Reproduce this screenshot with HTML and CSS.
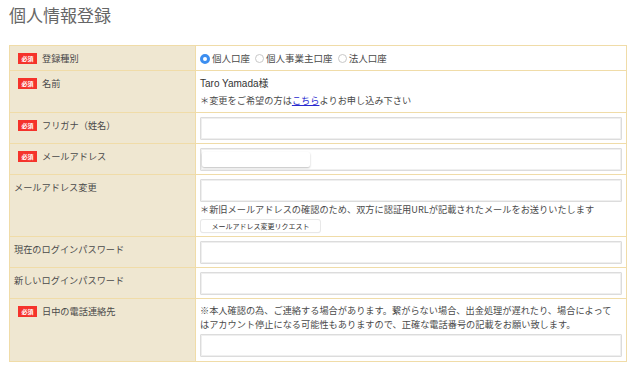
FILE: index.html
```html
<!DOCTYPE html>
<html lang="ja">
<head>
  <meta charset="UTF-8">
  <title>個人情報登録</title>
  <link rel="stylesheet" href="styles.css">
</head>
<body>
  <h1 class="page-title">個人情報登録</h1>
  <table class="form-table">
    <tr class="row-type">
      <th><span class="req">必須</span>登録種別</th>
      <td>
        <label class="radio"><span class="dot checked"></span>個人口座</label>
        <label class="radio"><span class="dot"></span>個人事業主口座</label>
        <label class="radio"><span class="dot"></span>法人口座</label>
      </td>
    </tr>
    <tr class="row-name">
      <th><span class="req">必須</span>名前</th>
      <td>
        <div class="name">Taro Yamada様</div>
        <div class="note">＊変更をご希望の方は<a href="#">こちら</a>よりお申し込み下さい</div>
      </td>
    </tr>
    <tr>
      <th><span class="req">必須</span>フリガナ（姓名）</th>
      <td><input type="text" class="field"></td>
    </tr>
    <tr>
      <th><span class="req">必須</span>メールアドレス</th>
      <td>
        <div class="field-wrap">
          <input type="text" class="field">
          <!-- browser autofill popup sitting on the field -->
          <div class="autofill"></div>
        </div>
      </td>
    </tr>
    <tr class="row-mail">
      <th class="plain">メールアドレス変更</th>
      <td>
        <input type="text" class="field">
        <div class="note">＊新旧メールアドレスの確認のため、双方に認証用URLが記載されたメールをお送りいたします</div>
        <button class="small-btn">メールアドレス変更リクエスト</button>
      </td>
    </tr>
    <tr>
      <th class="plain">現在のログインパスワード</th>
      <td><input type="password" class="field"></td>
    </tr>
    <tr>
      <th class="plain">新しいログインパスワード</th>
      <td><input type="password" class="field"></td>
    </tr>
    <tr class="row-tel">
      <th><span class="req">必須</span>日中の電話連絡先</th>
      <td>
        <div class="note tel-note">※本人確認の為、ご連絡する場合があります。繋がらない場合、出金処理が遅れたり、場合によって<br>はアカウント停止になる可能性もありますので、正確な電話番号の記載をお願い致します。</div>
        <input type="text" class="field">
      </td>
    </tr>
  </table>
</body>
</html>
```

FILE: styles.css
```css
body {
  margin: 0;
  padding: 0 0 0 9px;
  background-color: #fff;
  color: #4a4a4a;
  font-family: "Noto Sans CJK JP", "Liberation Sans", sans-serif;
  font-size: 9.2px;
}
.page-title {
  margin: 0;
  padding-top: 4px;
  height: 41px;
  font-size: 17px;
  font-weight: normal;
  color: #666;
  line-height: 22px;
}
.form-table {
  width: 618px;
  border-collapse: collapse;
  border: 1px solid #f0dca8;
}
.form-table th,
.form-table td {
  border: 1px solid #f0dca8;
  padding: 4px 4px 3px;
  vertical-align: top;
  text-align: left;
  line-height: 16px;
}
.form-table th {
  width: 177px;
  background-color: #efe7d1;
  font-weight: normal;
  color: #4a4a4a;
}
.req {
  display: inline-block;
  margin: 0 5px 0 4px;
  width: 19px;
  height: 11px;
  line-height: 11px;
  background-color: #f5332b;
  color: #fff;
  font-size: 6px;
  text-align: center;
  vertical-align: 1px;
  font-weight: bold;
}
.form-table td {
  background-color: #fff;
}
.row-type td,
.row-type th {
  padding-top: 4px;
  padding-bottom: 4px;
}
.radio {
  margin-right: 1px;
  white-space: nowrap;
  font-size: 9.5px;
}
.dot {
  display: inline-block;
  width: 9px;
  height: 9px;
  margin: 0 2px 0 2px;
  border: 1px solid #c8c8c8;
  border-radius: 50%;
  vertical-align: -1px;
  background: #fff;
  box-sizing: border-box;
}
.dot.checked {
  border: 3px solid #3c8ef0;
  background: #fff;
  width: 10px;
  height: 10px;
  margin-left: 0;
  vertical-align: -2px;
}
.row-name td,
.row-name th {
  padding-top: 4px;
  padding-bottom: 3px;
}
.name {
  font-family: "Liberation Sans", "Noto Sans CJK JP", sans-serif;
  font-size: 10px;
  line-height: 17px;
  color: #333;
}
.row-name .note {
  line-height: 17px;
}
.note a {
  color: #2a2ad0;
  text-decoration: underline;
}
.field {
  display: block;
  width: 100%;
  height: 23px;
  margin: 0;
  padding: 2px 4px;
  border: 1px solid #dcdcdc;
  box-shadow: inset 0 0 0 1px #efefef;
  border-radius: 1px;
  background: #fff;
  box-sizing: border-box;
  font-size: 10px;
}
.field-wrap {
  position: relative;
}
.autofill {
  position: absolute;
  left: 2px;
  top: 4px;
  width: 108px;
  height: 15px;
  background: #fff;
  border-radius: 2px;
  box-shadow: 0 1px 2px rgba(0,0,0,0.25);
}
.row-mail td {
  padding-bottom: 4px;
}
.row-mail .note {
  line-height: 15px;
}
.small-btn {
  display: block;
  margin: 3px 0 0 1px;
  width: 119px;
  height: 12px;
  padding: 0;
  border: none;
  border-radius: 2px;
  background: #fff;
  box-shadow: 0 0 0 1px #e8e8e8, 0 1px 1px #ddd;
  color: #333;
  font-family: "Noto Sans CJK JP", sans-serif;
  font-size: 7px;
  line-height: 12px;
}
.row-tel td,
.row-tel th {
  padding-top: 4px;
  padding-bottom: 4px;
}
.tel-note {
  line-height: 14px;
  margin-bottom: 3px;
  white-space: nowrap;
}
```
